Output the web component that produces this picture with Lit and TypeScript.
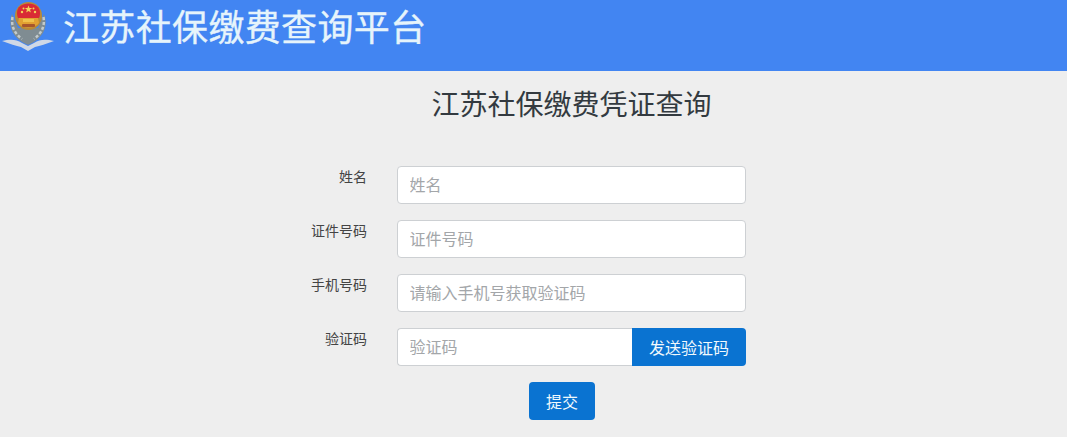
import { LitElement, html, css } from "lit";
import { customElement } from "lit/decorators.js";

@customElement("app-root")
export class AppRoot extends LitElement {
  static styles = css`
    :host {
      display: block;
      width: 1067px;
      height: 437px;
      overflow: hidden;
      background: #eeeeee;
      font-family: "Noto Sans CJK SC", "Liberation Sans", sans-serif;
    }
    * { box-sizing: border-box; }
    .header {
      height: 71px;
      background: #4285f2;
      display: flex;
      align-items: flex-start;
      padding: 0 0 0 2px;
      gap: 8px;
    }
    .emblem { width: 53px; height: 52px; flex: none; }
    .brand {
      margin: 2px 0 0 0;
      font-size: 36px;
      line-height: 46px;
      letter-spacing: 0.35px;
      font-weight: 400;
      -webkit-text-stroke: 0.35px #e6f4fb;
      color: #e6f4fb;
      white-space: nowrap;
    }
    h1 {
      margin: 14px 0 0 0;
      padding-left: 76px;
      text-align: center;
      font-size: 28px;
      line-height: 36px;
      font-weight: 400;
      color: #333a40;
    }
    form {
      margin: 45px 0 0 0;
      display: flex;
      flex-direction: column;
      gap: 16px;
      padding-left: 297px;
    }
    .row {
      display: grid;
      grid-template-columns: 70px 349px;
      column-gap: 30px;
      height: 38px;
    }
    label {
      font-size: 14px;
      line-height: 20px;
      color: #444;
      text-align: right;
    }
    .field { display: flex; height: 38px; }
    input {
      flex: 1;
      min-width: 0;
      height: 38px;
      border: 1px solid #cdd0d3;
      border-radius: 4px;
      background: #fff;
      padding: 0 11px 2px 11.5px;
      font: inherit;
      font-size: 16px;
      color: #333;
      outline: none;
    }
    input::placeholder { color: #a3a6a9; opacity: 1; }
    .joined input { border-radius: 4px 0 0 4px; border-right: none; }
    button {
      border: none;
      height: 38px;
      background: #0a73d1;
      color: #f1f9fd;
      font: inherit;
      font-size: 16px;
      padding: 0;
      border-radius: 4px;
    }
    .send { width: 114px; flex: none; border-radius: 0 4px 4px 0; }
    .actions { display: flex; padding-left: 232px; }
    .submit { width: 66px; }
  `;

  render() {
    return html`
      <header class="header">
        <svg class="emblem" viewBox="0 0 53 52" aria-hidden="true">
          <path d="M0 41 C8 39 14 39 20 43 L26 46 L32 43 C38 39 44 39 52 41 C44 44 38 46 33 47 L26 51 L19 47 C14 46 8 44 0 41 Z" fill="#cfd8e6" />
          <path d="M10 14 C6 24 9 35 20 42 L26 45 L32 42 C43 35 46 24 42 14 L36 28 L16 28 Z" fill="#7f8c92" />
          <path d="M10.500 17 C9 26 12 33 20 39" fill="none" stroke="#c4cbcc" stroke-width="2.500" stroke-dasharray="3 2" />
          <path d="M41.500 17 C43 26 40 33 32 39" fill="none" stroke="#c4cbcc" stroke-width="2.500" stroke-dasharray="3 2" />
          <ellipse cx="26.500" cy="16" rx="13.500" ry="14" fill="#b98a38" />
          <path d="M15 13 C15 7 20 3.500 26.500 3.500 C33 3.500 38 7 38 13 C38 15 37.500 17 37 18 L16 18 C15.500 17 15 15 15 13 Z" fill="#d92a35" />
          <path d="M26.500 5.500 l1 2.600 h2.700 l-2.200 1.700 l0.900 2.700 l-2.400-1.600 l-2.400 1.600 l0.900-2.700 l-2.200-1.700 h2.700 Z" fill="#f2d35a" />
          <circle cx="20" cy="12" r="1.200" fill="#f2d35a" />
          <circle cx="33" cy="12" r="1.200" fill="#f2d35a" />
          <circle cx="21.500" cy="8.500" r="1" fill="#f2d35a" />
          <circle cx="31.500" cy="8.500" r="1" fill="#f2d35a" />
          <path d="M17 18 H36 L37 23 C33 29 20 29 16 23 Z" fill="#e2a132" />
          <rect x="20" y="24" width="13" height="3" rx="1" fill="#a8562c" />
          <rect x="21" y="19" width="11" height="3" fill="#f0c24c" />
        </svg>
        <div class="brand">江苏社保缴费查询平台</div>
      </header>
      <main>
        <h1>江苏社保缴费凭证查询</h1>
        <form>
          <div class="row">
            <label for="n">姓名</label>
            <div class="field"><input id="n" placeholder="姓名" /></div>
          </div>
          <div class="row">
            <label for="i">证件号码</label>
            <div class="field"><input id="i" placeholder="证件号码" /></div>
          </div>
          <div class="row">
            <label for="p">手机号码</label>
            <div class="field"><input id="p" placeholder="请输入手机号获取验证码" /></div>
          </div>
          <div class="row">
            <label for="c">验证码</label>
            <div class="field joined">
              <input id="c" placeholder="验证码" />
              <button type="button" class="send">发送验证码</button>
            </div>
          </div>
          <div class="actions"><button type="button" class="submit">提交</button></div>
        </form>
      </main>
    `;
  }
}
